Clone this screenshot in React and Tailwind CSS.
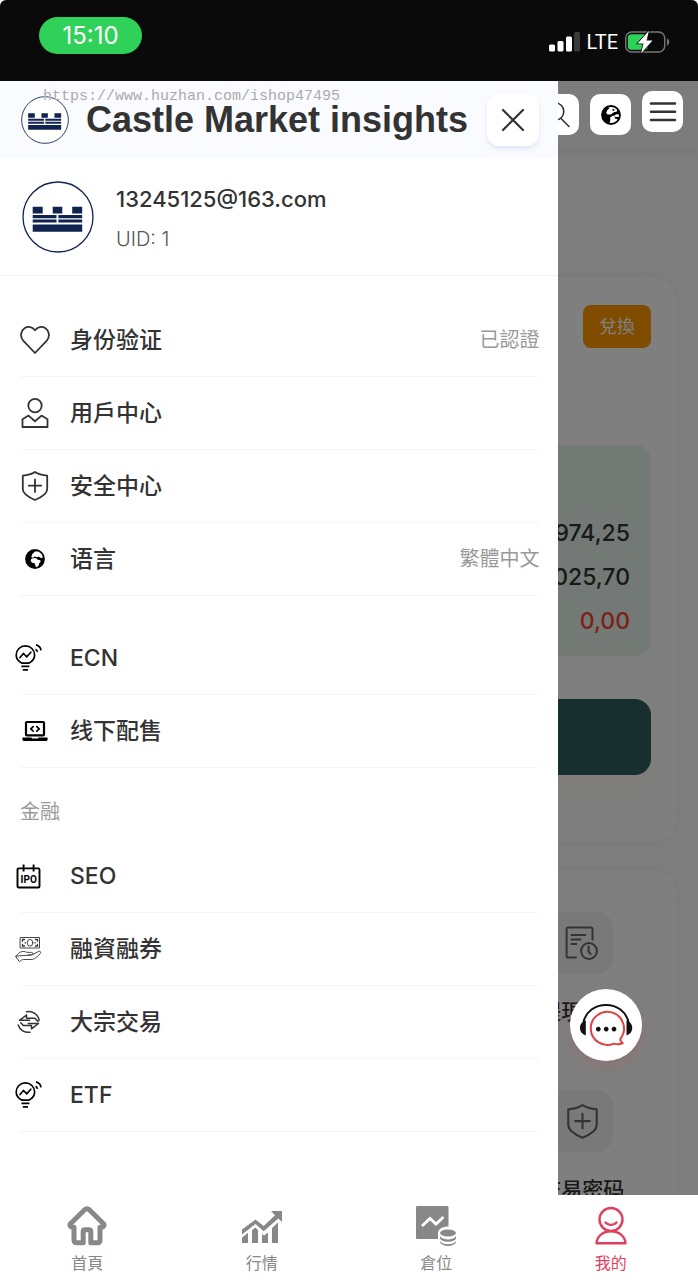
import { useState } from 'react'

const NAVY = '#10244f'

// ── 图标 ──
function Logo({ className = '' }) {
  return (
    <svg viewBox="0 0 72 72" className={'shrink-0 ' + className} aria-hidden="true">
      <circle cx="36" cy="36" r="35" fill="#fff" stroke={NAVY} strokeWidth="1.3" />
      <path
        fill={NAVY}
        d="M10.7 25.7h10v6.8h-10zM30.7 25.7h9.6v6.8h-9.6zM50.2 25.7h10v6.8h-10zM10.7 34h23.8v3.2H10.7zM36.4 34h23.8v3.2H36.4zM10.7 38.6h23.8v3H10.7zM36.4 38.6h23.8v3H36.4zM10.7 43.4h49.5v7.4H10.7z"
      />
    </svg>
  )
}

function Line({ size = 30, box = 30, width = 1.8, className = '', children }) {
  return (
    <svg
      width={size}
      height={size}
      viewBox={`0 0 ${box} ${box}`}
      fill="none"
      stroke="currentColor"
      strokeWidth={width}
      strokeLinecap="round"
      strokeLinejoin="round"
      className={'shrink-0 ' + className}
      aria-hidden="true"
    >
      {children}
    </svg>
  )
}

const Heart = () => (
  <Line>
    <path d="M15 28 3.200 15.600C-.2 11.600.6 5.900 4.500 3.200 8.200.8 12.600 1.900 15 5.200 17.400 1.900 21.800.8 25.500 3.200c3.900 2.700 4.700 8.400 1.300 12.400Z" />
  </Line>
)

const User = () => (
  <Line>
    <circle cx="15" cy="7.600" r="6.700" />
    <path d="M2.500 29V21.300L8.500 17.600 15 23.200l6.500-5.600 6 3.700V29Z" />
  </Line>
)

const Shield = ({ size = 30 }) => (
  <Line size={size}>
    <path d="M15 1C18.500 3.200 22.500 4.200 27.200 4.600v13.400c0 4.800-6.600 8.600-12.200 11C9.400 26.600 2.800 22.800 2.800 18V4.600C7.500 4.200 11.500 3.200 15 1ZM15 8.500v12.400M8.800 14.700h12.400" />
  </Line>
)

const Globe = ({ className = '' }) => (
  <svg width="20" height="20" viewBox="0 0 20 20" className={'shrink-0 ' + className} aria-hidden="true">
    <circle cx="10" cy="10" r="9.900" fill="#000" />
    <path
      fill="#fff"
      d="M7.500 4.800 10 2.600 13.500 2.600 16.600 5 17.800 8 17 9.300 15 8.600 13.800 7.400 12 8.200 9.600 7.500 8 8.800 6.200 8.200ZM6 10.200 8.500 9l2.700.3 1.200 1.300 2.800.6.500 1.500-1.500 1.500-.5 2-1.700 2-1.600-1-.4-2.600-2.700-.8-1.600-1.600Z"
    />
  </svg>
)

const GlobeOutline = () => (
  <svg width="20" height="20" viewBox="0 0 20 20" className="shrink-0" aria-hidden="true">
    <circle cx="10" cy="10" r="9" fill="#fff" stroke="#000" strokeWidth="1.800" />
    <path d="M5.500 1.800 8.600 3 6.200 5.300 5.200 8l1.400 1.400 3.600.2.800 1.600-2 1.400.4 2.200-.8 3.200C4 17.600 1 14 1 10 1 6 3 3 5.500 1.800Z" />
    <path d="m9.800 9.600 3-2.300 2.900-.6.300-2 2.400 1.800.3 3-3.600-.2-1.800 1.400-2.600.3ZM13.500 11.800l4.900.2-1 2.400-3.400-1Z" />
    <path d="m11 4.800 1.700-1 1 1.300-1.500 1Z" />
  </svg>
)

const Bulb = () => (
  <Line size={28} box={28} width={1.700} className="text-black">
    <path d="M7 19.200C3.600 17.600 1.200 15 1.200 11A9.200 9.200 0 0 1 19.600 11c0 4-2.400 6.600-5.800 8.200ZM5 13.500l3.500-4 3.300 3.300 4-4.600" />
    <path strokeLinecap="butt" d="M6.400 22.400h8M7.800 25.800h5.200M20.500 5.200c1 .4 1.700 1.300 1.900 2.600M21 .9c2.800.8 4.700 2.700 5 5.500" />
  </Line>
)

const Laptop = () => (
  <Line size={26} box={26} width={2.200} className="ml-0.5 text-black">
    <rect x="4" y="4" width="18" height="13.400" rx=".8" />
    <path d="m11.200 8.600-2.400 2.300 2.400 2.300M14.800 8.600l2.400 2.300-2.400 2.300" strokeWidth="1.700" />
    <path d="M.4 19.600h9l.8 1h5.600l.8-1h9v1.600c0 1-.8 1.800-1.800 1.800H2.200c-1 0-1.800-.8-1.800-1.800Z" fill="currentColor" stroke="none" />
  </Line>
)

const Calendar = () => (
  <svg width="25" height="25" viewBox="0 0 25 25" className="ml-px shrink-0" aria-hidden="true">
    <path
      d="M2.800 4.400h19.400c.8 0 1.300.5 1.300 1.300v16.500c0 .8-.5 1.300-1.300 1.300H2.800c-.8 0-1.300-.5-1.300-1.300V5.700c0-.8.5-1.300 1.300-1.300ZM7.600.6v7M17.600.6v7"
      fill="none"
      stroke="#000"
      strokeWidth="1.900"
    />
    <text x="12.700" y="18.600" textAnchor="middle" fontFamily="Roboto, sans-serif" fontWeight="700" fontSize="10">
      IPO
    </text>
  </svg>
)

const CashHand = () => (
  <Line size={27} box={27} width={0.9}>
    <rect x="5.500" y="1.500" width="19" height="10.500" />
    <ellipse cx="15" cy="6.800" rx="2.800" ry="3.400" />
    <path d="M7.500 5.200V3.500h2M22.500 5.200V3.500h-2M7.500 8.400V10h2M22.500 8.400V10h-2M10 6.800h.5M19.800 6.800h.5" strokeWidth="1.300" />
    <path d="M.8 20.500c2.200-2.400 3.800-4.700 6.600-5 2.400-.2 3.700.8 5.700.9h3.500c1.500 0 1.700 2 .2 2.400l-4 .3M17.300 18.700l6.500-3.300c1.300-.5 2.500.7 1.500 1.900-2.300 3-5 5.400-8 6.200H8.500c-1.700 0-2.900 1.200-4.200 2.200L.8 20.500Z" />
  </Line>
)

// 双向箭头 + 外圈弧线
const Swap = () => (
  <Line size={24} box={24} width={1.500} className="ml-0.5">
    <path d="M9.500 1.700c6-1.200 11.700 2.500 12.700 8.600M1.200 15c1.700 5.200 6.500 8 11.800 7.200" />
    <path d="M9.500 5 2.500 10.300h10.200M9.500 5v3.200h8.200M14.500 18.800l7-5.300H11.300M14.500 18.800v-3.200H6.300L3.800 12.700M17.700 8.200l3.300 3.200" />
  </Line>
)

const Record = () => (
  <Line size={34} box={34} width={2}>
    <path d="M27.500 13.500V3c0-.9-.7-1.600-1.600-1.600H3.200c-.9 0-1.600.7-1.600 1.600v27c0 .9.700 1.600 1.600 1.600H11M6.500 9h13.700M6.500 13.500h9M6.500 18h4.800" />
    <circle cx="24" cy="25" r="7.900" />
    <path d="M23.600 20.500v5l2 2.600" />
  </Line>
)

const Headset = () => (
  <svg viewBox="0 0 72 72" className="size-full" aria-hidden="true">
    <path d="M13.500 33C16 22.500 25 16 36 16s20 6.500 22.500 17" fill="none" stroke="#111" strokeWidth="2" />
    <path d="M15.800 31.500V46.500C11.500 45 10 42 10 38.800s1.700-6 5.800-7.300ZM56.500 31.500V46.500C60.800 45 62.200 42 62.200 38.800s-1.600-6-5.700-7.300Z" fill="#111" />
    <path
      d="M50.300 49.800A16.600 16.600 0 1 0 44 54.600c2.800.9 6 .9 8.800-.5-1.600-.8-2.500-2.400-2.500-4.300Z"
      fill="none"
      stroke="#dc4444"
      strokeWidth="2"
      strokeLinejoin="round"
    />
    <path d="M28.300 37.700a2.400 2.400 0 1 0 .01 0ZM36.200 37.700a2.400 2.400 0 1 0 .01 0ZM44 37.700a2.400 2.400 0 1 0 .01 0Z" fill="#111" />
  </svg>
)

// ── 底部导航图标 ──
const NavHome = () => (
  <Line size={40} box={40} width={5}>
    <path d="M18 3.500a2.800 2.800 0 0 1 4 0L36.300 17.500c1.500 1.600.6 3.400-1.500 3.700H33V34c0 1.800-1 2.800-2.800 2.800h-6.400V25.500c0-1.200-.6-1.800-1.800-1.800h-4c-1.200 0-1.800.6-1.800 1.800v11.300H9.800C8 36.800 7 35.800 7 34V21.200H5.200c-2.100-.3-3-2.100-1.500-3.700Z" />
  </Line>
)

const NavTrend = () => (
  <svg width="40" height="40" viewBox="0 0 40 40" fill="currentColor" aria-hidden="true">
    <path d="M29 5h11v11l-3.700-3.500L21.700 25.200l-8.200-7.300L0 28.500v-5.100L13.500 13.400l8.200 6.600L33 9.300Z" />
    <path d="M0 31.500l6-4.800V37H0ZM10 24l3.500-2.500L16 24v13h-6ZM20 28l2 1.500 4-3V37h-6ZM30 22l6-5.500V37h-6Z" />
  </svg>
)

const NavPosition = () => (
  <svg width="40" height="40" viewBox="0 0 40 40" fill="currentColor" aria-hidden="true">
    <path d="M1.500 0H31c1 0 1.500.5 1.500 1.500V20.500c-6 0-10.500 2.500-10.500 6.500v6H1.500C.5 33 0 32.500 0 31.500v-30C0 .5.500 0 1.500 0Z" />
    <path d="m6 20 8-7.500 6 5.500 7.500-7" fill="none" stroke="#fff" strokeWidth="2.800" />
    <ellipse cx="32" cy="27" rx="8" ry="3.500" />
    <path d="M24 30c2 4.500 14 4.500 16 0v2.500c-2 4.300-14 4.300-16 0ZM24 35c2 4.300 14 4.300 16 0v1.500c-2 4.500-14 4.500-16 0Z" />
  </svg>
)

const NavMine = () => (
  <Line size={40} box={40} width={2.400}>
    <circle cx="20" cy="13.500" r="11.500" />
    <path d="M14.500 16.500c3 3.300 8 3.300 11 0M5.500 37.300C6 30 12 25.300 20 25.300S34 30 34.500 37.300Z" />
  </Line>
)

const groups = [
  {
    items: [
      { label: '身份验证', icon: Heart, extra: '已認證' },
      { label: '用戶中心', icon: User },
      { label: '安全中心', icon: Shield },
      { label: '语言', icon: () => <Globe className="ml-[5px]" />, extra: '繁體中文' },
    ],
  },
  {
    items: [
      { label: 'ECN', icon: Bulb, wide: true },
      { label: '线下配售', icon: Laptop },
    ],
  },
  {
    title: '金融',
    items: [
      { label: 'SEO', icon: Calendar, wide: true },
      { label: '融資融券', icon: CashHand, wide: true },
      { label: '大宗交易', icon: Swap, wide: true },
      { label: 'ETF', icon: Bulb, wide: true },
    ],
  },
]

const tabs = [
  { label: '首頁', icon: NavHome },
  { label: '行情', icon: NavTrend },
  { label: '倉位', icon: NavPosition },
  { label: '我的', icon: NavMine },
]

function StatusBar() {
  return (
    <div className="flex h-[81px] shrink-0 items-start justify-between rounded-t-md bg-[#0a0a0a] pt-[17px] pr-7 pl-[39px] text-white">
      <span className="flex h-[37px] w-[103px] items-center justify-center rounded-full bg-[#30d158] text-2xl">15:10</span>
      <div className="flex items-center gap-[7px] pt-[13px]">
        <svg width="31" height="20" viewBox="0 0 31 20" fill="#fff" aria-hidden="true">
          <rect y="12.500" width="6" height="7" rx="1.500" />
          <rect x="8.500" y="9" width="6" height="10.500" rx="1.500" />
          <rect x="17" y="4.500" width="6" height="15" rx="1.500" />
          <rect x="25" y="0" width="6" height="19.500" rx="1.500" fill="#3a3a3a" />
        </svg>
        <span className="font-[Roboto,sans-serif] text-xl leading-6">LTE</span>
        <svg width="45" height="24" viewBox="0 0 45 24" aria-hidden="true">
          <rect x=".7" y="2" width="39" height="20" rx="6" fill="none" stroke="#777" strokeWidth="1.400" />
          <rect x="2.800" y="4.200" width="20" height="15.600" rx="3.500" fill="#30d158" />
          <path d="M42 8.500c3 1.200 3 5.800 0 7Z" fill="#777" />
          <path d="M24 .8 12.500 13.500h6L16 23.500 27.500 10.500h-6Z" fill="#fff" stroke="#0a0a0a" strokeWidth="1.500" paintOrder="stroke" />
        </svg>
      </div>
    </div>
  )
}

function SquareButton({ label, onClick, children }) {
  return (
    <button
      aria-label={label}
      onClick={onClick}
      className="relative z-20 flex size-[41px] items-center justify-center rounded-[10px] bg-white text-[#333]"
    >
      {children}
    </button>
  )
}

function Tile({ icon, label }) {
  return (
    <button className="col-start-4 flex flex-col items-center gap-[23px]">
      <span className="flex size-[62px] items-center justify-center rounded-2xl bg-[#f2f2f2] text-[#666]">{icon}</span>
      <span className="text-[21px] leading-[30px] font-medium whitespace-nowrap text-[#333]">{label}</span>
    </button>
  )
}

function AccountPage({ onMenu }) {
  return (
    <div className="bg-[#fdfdfd]">
      <header className="flex h-[68px] items-start justify-end gap-[11px] bg-[#f8f8f9] pt-2.5 pr-[15px] shadow-[0_4px_10px_rgba(0,0,0,0.08)]">
        <div className="flex gap-[11px] pt-[3px]">
          <SquareButton label="搜尋">
            <Line size={28} box={28} width={1.600}>
              <circle cx="10" cy="10.500" r="8.800" />
              <path d="m16 17.500 8 8" />
            </Line>
          </SquareButton>
          <SquareButton label="语言">
            <GlobeOutline />
          </SquareButton>
        </div>
        <SquareButton label="選單" onClick={onMenu}>
          <Line size={28} box={28} width={2.600}>
            <path d="M2 5.500h24M2 13.800h24M2 22h24" />
          </Line>
        </SquareButton>
      </header>

      <section className="mx-[22px] mt-32 h-[565px] rounded-3xl bg-white px-[25px] pt-7 shadow-[0_0_12px_rgba(0,0,0,0.06)]">
        <div className="flex justify-end">
          <button className="h-[43px] w-[68px] rounded-lg bg-[#ff9800] text-lg text-white">兌換</button>
        </div>
        <div className="mt-[97px] rounded-2xl bg-[#e6f2e8] px-[21px] pt-[66px] pb-[13px] text-right text-[23px] leading-[44px] font-medium text-[#333]">
          <p>974,25</p>
          <p>025,70</p>
          <p className="text-[#f44336]">0,00</p>
        </div>
        <button aria-label="充值" className="mt-[43px] block h-[76px] w-full rounded-2xl bg-[#305e5e] shadow-[0_10px_24px_rgba(255,230,160,0.15)]" />
      </section>

      <section className="mx-[22px] mt-7 grid grid-cols-4 gap-y-[63px] rounded-3xl bg-white px-4 py-[42px] shadow-[0_0_12px_rgba(0,0,0,0.06)]">
        <Tile icon={<Record />} label="提現記錄" />
        <Tile icon={<Shield size={35} />} label="交易密码" />
      </section>
    </div>
  )
}

function MenuRow({ item }) {
  const Icon = item.icon
  return (
    <li>
      <a href="#" className="flex h-[73px] items-center border-b border-[#f5f5f5] text-[#333]">
        <span className="w-[50px] shrink-0">
          <span className={'block ' + (item.wide ? '-ml-[5px]' : '')}>
            <Icon />
          </span>
        </span>
        <span className="flex-1 text-[23px] font-medium">{item.label}</span>
        {item.extra && <span className="text-xl text-[#999]">{item.extra}</span>}
      </a>
    </li>
  )
}

function Drawer({ onClose }) {
  return (
    <aside className="absolute inset-y-0 left-0 z-30 w-4/5 overflow-hidden bg-white">
      <div className="flex h-[77px] items-center bg-[#fafbff] pr-[19px] pl-[21px]">
        <Logo className="size-12" />
        <h1 className="ml-[17px] flex-1 font-['Liberation_Sans',sans-serif] text-4xl font-bold whitespace-nowrap text-[#333]">
          Castle Market insights
        </h1>
        <button
          aria-label="關閉"
          onClick={onClose}
          className="flex size-[52px] items-center justify-center rounded-xl bg-white text-[#333] shadow-md shadow-slate-200"
        >
          <Line size={24} box={24} width={2.200}>
            <path d="m2 2 20 20M22 2 2 22" />
          </Line>
        </button>
      </div>

      <div className="flex h-[118px] items-center gap-[22px] border-b border-[#f0f0f0] px-[22px]">
        <Logo className="size-[72px]" />
        <div className="pt-1">
          <p className="text-[22px] leading-10 font-medium text-[#333]">13245125@163.com</p>
          <p className="text-xl leading-10 font-light text-[#555]">UID: 1</p>
        </div>
      </div>

      <nav className="flex flex-col pt-7 pr-[19px] pl-5">
        {groups.map((g, i) => (
          <section key={i} className={i === 1 ? 'mt-[26px]' : ''}>
            {g.title && <h2 className="flex h-[72px] items-center pt-4 text-xl text-[#999]">{g.title}</h2>}
            <ul>
              {g.items.map((it) => (
                <MenuRow key={it.label} item={it} />
              ))}
            </ul>
          </section>
        ))}
      </nav>
    </aside>
  )
}

function TabBar() {
  const [active, setActive] = useState(3)
  return (
    <nav className="grid h-[85px] shrink-0 grid-cols-4 bg-white">
      {tabs.map((t, i) => {
        const Icon = t.icon
        return (
          <button
            key={t.label}
            onClick={() => setActive(i)}
            className={'flex flex-col items-center gap-[5px] pt-[11px] ' + (active === i ? 'text-[#e0405f]' : 'text-[#888]')}
          >
            <Icon />
            <span className="text-base leading-6">{t.label}</span>
          </button>
        )
      })}
    </nav>
  )
}

export default function App() {
  const [open, setOpen] = useState(true)

  return (
    <div className="flex h-screen flex-col bg-white font-[Inter,'Noto_Sans_CJK_SC',sans-serif]">
      <StatusBar />
      <main className="relative flex-1 overflow-hidden">
        <AccountPage onMenu={() => setOpen(true)} />
        {open && <div className="absolute inset-0 z-10 bg-black/50" />}
        {open && <Drawer onClose={() => setOpen(false)} />}
        <p className="pointer-events-none absolute top-1.5 left-[43px] z-40 font-['Liberation_Mono',monospace] text-[15px] leading-5 text-[#aaa] [text-shadow:0_0_1px_#fff]">
          https://www.huzhan.com/ishop47495
        </p>
        <button
          aria-label="客服"
          className="absolute right-14 bottom-[134px] z-40 size-[72px] rounded-full bg-white shadow-[0_6px_14px_rgba(200,60,70,0.16)]"
        >
          <Headset />
        </button>
      </main>
      <TabBar />
    </div>
  )
}
